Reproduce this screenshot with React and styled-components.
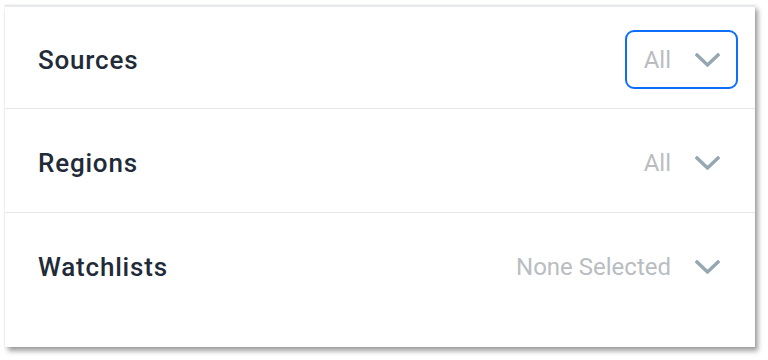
import React from 'react';
import styled, { createGlobalStyle } from 'styled-components';

const GlobalStyle = createGlobalStyle`
  html, body {
    margin: 0;
    padding: 0;
    background: #ffffff;
  }
  body {
    font-family: Roboto, "Liberation Sans", Arial, sans-serif;
    -webkit-font-smoothing: antialiased;
  }
`;

const Page = styled.div`
  width: 768px;
  height: 360px;
  padding: 5px 0 0 5px;
  box-sizing: border-box;
`;

const Card = styled.div`
  width: 750px;
  height: 342px;
  box-sizing: border-box;
  background: #fff;
  border-top: 2px solid #e6e9ed;
  box-shadow: 3px 4px 5px rgba(0, 0, 0, 0.38), 0 0 0 1px rgba(0, 0, 0, 0.03);
  display: flex;
  flex-direction: column;
`;

const Row = styled.div`
  height: 104px;
  box-sizing: border-box;
  display: flex;
  align-items: center;
  justify-content: space-between;
  padding: 4px 17px 0 33px;
  border-bottom: ${(p) => (p.last ? 'none' : '1px solid #e6e6e6')};
  &:first-child {
    height: 102px;
  }
`;

const Label = styled.span`
  font-size: 26px;
  font-weight: 500;
  color: #1f2b38;
  letter-spacing: 0.8px;
`;

const Select = styled.button`
  display: flex;
  align-items: center;
  gap: 24px;
  height: 59px;
  box-sizing: border-box;
  padding: 0 16px 0 17px;
  background: transparent;
  border: 2px solid ${(p) => (p.focused ? '#0d6efd' : 'transparent')};
  border-radius: 9px;
  font-family: inherit;
  cursor: pointer;
`;

const Value = styled.span`
  font-size: 24px;
  color: #b9bdc1;
`;

const Chevron = () => (
  <svg width="25" height="14" viewBox="0 0 25 14" fill="none">
    <path
      d="M2 2 L12.5 12 L23 2"
      stroke="#95a7b1"
      strokeWidth="3.4"
      strokeLinecap="square"
      strokeLinejoin="miter"
    />
  </svg>
);

const filters = [
  { label: 'Sources', value: 'All', focused: true },
  { label: 'Regions', value: 'All' },
  { label: 'Watchlists', value: 'None Selected' },
];

export default function App() {
  return (
    <Page>
      <GlobalStyle />
      <Card>
        {filters.map((f, i) => (
          <Row key={f.label} last={i === filters.length - 1}>
            <Label>{f.label}</Label>
            <Select focused={f.focused}>
              <Value>{f.value}</Value>
              <Chevron />
            </Select>
          </Row>
        ))}
      </Card>
    </Page>
  );
}
